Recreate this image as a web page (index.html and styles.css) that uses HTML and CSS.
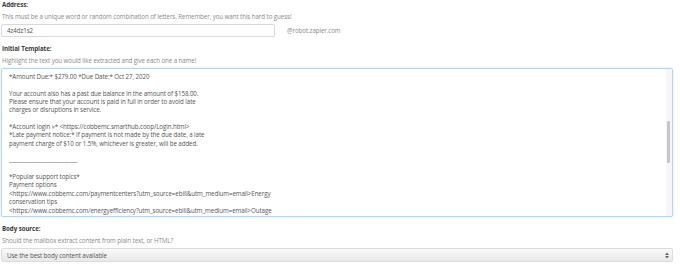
FILE: index.html
```html
<!DOCTYPE html>
<html>
<head>
<meta charset="utf-8">
<link rel="stylesheet" href="styles.css">
</head>
<body>
<div class="form">
  <div class="label first">Address:</div>
  <div class="help">This must be a unique word or random combination of letters. Remember, you want this hard to guess!</div>
  <div class="addr-row">
    <div class="input">4z4dz1s2</div>
    <span class="suffix">@robot.zapier.com</span>
  </div>

  <div class="label">Initial Template:</div>
  <div class="help">Highlight the text you would like extracted and give each one a name!</div>
  <div class="textarea">
    <div class="ta-content">*Amount Due:* $279.00 *Due Date:* Oct 27, 2020

Your account also has a past due balance in the amount of $158.00.
Please ensure that your account is paid in full in order to avoid late
charges or disruptions in service.

*Account login »* &lt;https://cobbemc.smarthub.coop/Login.html&gt;
*Late payment notice:* If payment is not made by the due date, a late
payment charge of $10 or 1.5%, whichever is greater, will be added.

__________________________

*Popular support topics*
Payment options
&lt;https://www.cobbemc.com/paymentcenters?utm_source=ebill&amp;utm_medium=email&gt;Energy
conservation tips
&lt;https://www.cobbemc.com/energyefficiency?utm_source=ebill&amp;utm_medium=email&gt;Outage
map</div>
    <div class="scrollbar"><div class="thumb"></div></div>
  </div>

  <div class="label">Body source:</div>
  <div class="help">Should the mailbox extract content from plain text, or HTML?</div>
  <div class="select">
    <span>Use the best body content available</span>
    <svg class="arrows" width="4" height="7" viewBox="0 0 4 7"><path d="M0 3 L2 0.5 L4 3 Z M0 4 L2 6.5 L4 4 Z" fill="#666"/></svg>
  </div>
</div>
</body>
</html>
```
FILE: styles.css
```css
html, body {
  margin: 0;
  padding: 0;
  background: #fff;
}
body {
  font-family: "Open Sans", "DejaVu Sans", sans-serif;
  font-size: 6.2px;
  letter-spacing: -0.08px;
  color: #555;
}
.form {
  display: flex;
  flex-direction: column;
  padding: 0 8px 0 1px;
  width: 672px;
}
.label {
  font-weight: 700;
  color: #3a3a3a;
  line-height: 9px;
  height: 9px;
  margin-top: 7px;
  padding-left: 1px;
}
.label.first {
  margin-top: 0;
}
.help {
  color: #8a8a8a;
  line-height: 9px;
  height: 9px;
  margin-top: 3px;
  padding-left: 1px;
}
.addr-row {
  display: flex;
  align-items: center;
  margin-top: 3px;
}
.input {
  width: 267px;
  height: 11px;
  border: 1px solid #d9d9d9;
  border-radius: 2px;
  line-height: 11px;
  padding-left: 5px;
  color: #555;
}
.suffix {
  margin-left: 12px;
  color: #8a8a8a;
}
.textarea {
  position: relative;
  margin-top: 3px;
  height: 147px;
  border: 1px solid #b5d5f3;
  border-radius: 2px;
  box-shadow: 0 0 2px rgba(120, 170, 230, 0.35);
  overflow: hidden;
}
.ta-content {
  white-space: pre;
  line-height: 8.35px;
  padding: 4px 0 0 7px;
  color: #555;
}
.scrollbar {
  position: absolute;
  top: 0;
  right: 0;
  width: 6px;
  height: 147px;
  background: #f6f6f6;
}
.thumb {
  position: absolute;
  left: 1px;
  top: 52px;
  width: 3px;
  height: 42px;
  background: #c6c6c6;
  border-radius: 1px;
}
.select {
  display: flex;
  align-items: center;
  justify-content: space-between;
  margin-top: 3px;
  height: 12px;
  border: 1px solid #dcdcdc;
  border-radius: 2px;
  background: linear-gradient(#fafafa, #e8e8e8);
  padding: 0 3px 0 5px;
  color: #555;
}
.arrows {
  display: block;
}
```
